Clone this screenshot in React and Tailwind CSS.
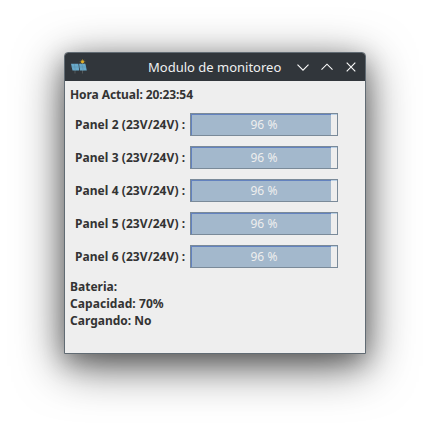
const panels = [
  { id: 2, volts: "23V/24V", percent: 96 },
  { id: 3, volts: "23V/24V", percent: 96 },
  { id: 4, volts: "23V/24V", percent: 96 },
  { id: 5, volts: "23V/24V", percent: 96 },
  { id: 6, volts: "23V/24V", percent: 96 },
];

function SolarIcon() {
  return (
    <svg className="size-4 shrink-0" viewBox="0 0 16 16" fill="none">
      <path d="M4 10v4.5M11.5 10v4.5" stroke="#53585a" />
      <path d="M11.5 0v5.5M8.7 2.7h5.6M9.6 .8l3.8 3.8M13.4 .8L9.6 4.6" stroke="#8d7430" strokeWidth=".8" />
      <circle cx="11.5" cy="2.7" r="1.5" fill="#e2b128" />
      <path d="M0 4.8h7.4l.8 6.7H1.5z M8 4.8h6.4l1.4 6.7H9z" fill="#69a9c9" />
      <path d="M.5 8h14.7M3.3 5l1 6.5M11 5l1.2 6.5" stroke="#568da9" strokeWidth=".5" />
    </svg>
  );
}

function TitleBar() {
  return (
    <div className="flex h-7 items-center bg-[#31363b] pl-1.5 pr-2 text-[#eff0f1]">
      <SolarIcon />
      <h1 className="ml-[61px] whitespace-nowrap text-[13px] leading-7">Modulo de monitoreo</h1>
      <svg className="ml-auto h-3 w-[60px] shrink-0" viewBox="0 0 60 12" fill="none" stroke="#fcfcfc" strokeWidth="1.1">
        <path d="M.5 3.7L6 9.2l5.5-5.5" />
        <path d="M24.5 8.7L30 3.2l5.5 5.5" />
        <path d="M49.7 1.7l8.6 8.6M58.3 1.7l-8.6 8.6" />
      </svg>
    </div>
  );
}

function PanelRow({ panel }) {
  return (
    <div className="flex h-[23px] items-center">
      <span className="w-[115px] whitespace-nowrap tracking-[0.06px]">
        Panel {panel.id} ({panel.volts}) :
      </span>
      <div className="grid h-[23px] w-[148px] border border-[#7a8a99] bg-[#eeeeee]">
        <div className="col-start-1 row-start-1 border-t border-[#b8cfe5]">
          <div
            className="-mt-px h-[21px] border-l border-t border-[#6382bf] bg-[#a3b8cc]"
            style={{ width: `${panel.percent}%` }}
          />
        </div>
        <span className="col-start-1 row-start-1 text-center font-normal leading-[21px] tracking-[0.1px] text-[#eeeeee]">
          {panel.percent} %
        </span>
      </div>
    </div>
  );
}

export default function App() {
  return (
    <div className="h-[430px] w-[430px] overflow-hidden bg-white pl-16 pt-[52px] font-['Noto_Sans',sans-serif]">
      <main className="h-[302px] w-[302px] overflow-hidden rounded-t-[4px] border border-[#616b73] bg-[#eeeeee] shadow-[0_12px_48px_rgba(0,0,0,0.6),0_8px_24px_rgba(0,0,0,0.3)]">
        <TitleBar />
        <div className="px-[5px] pt-[5px] text-xs font-bold leading-[17px] text-[#333333]">
          <p className="tracking-[-0.09px]">Hora Actual: 20:23:54</p>
          <div className="mt-2.5 flex flex-col gap-2.5 pl-[5px]">
            {panels.map((panel) => (
              <PanelRow key={panel.id} panel={panel} />
            ))}
          </div>
          <div className="mt-2.5">
            <p>Bateria:</p>
            <p className="tracking-[0.06px]">Capacidad: 70%</p>
            <p>Cargando: No</p>
          </div>
        </div>
      </main>
    </div>
  );
}
